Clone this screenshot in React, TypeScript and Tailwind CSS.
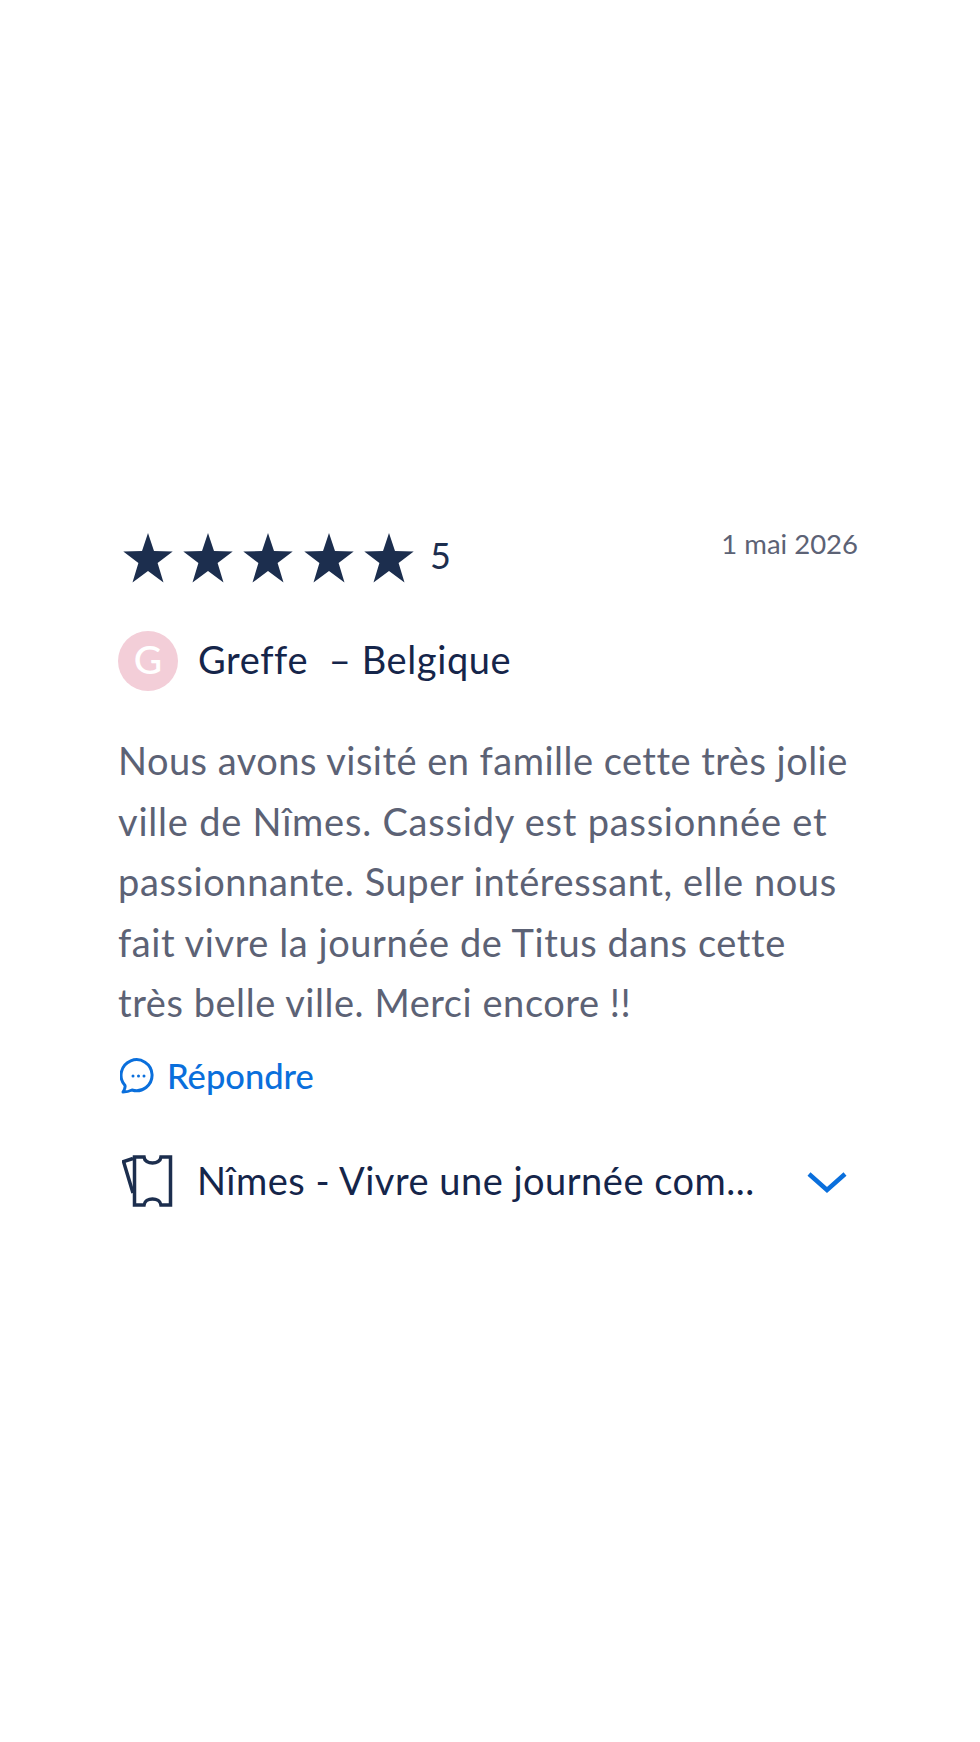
import React from "react";

const font = { fontFamily: '"Lato", "Noto Sans", sans-serif' };

function Star() {
  return (
    <svg width="50" height="50" viewBox="0 0 50 50" className="shrink-0">
      <path d="M25 0 L31 18 L49.7 18.5 L34.6 30 L40.5 49.5 L25 38 L9.5 49.5 L15.4 30 L0.3 18.5 L19 18 Z" fill="#1c2e4e" />
    </svg>
  );
}

export default function App() {
  return (
    <div className="w-[980px] h-[1742px] bg-white flex flex-col pt-[523px] pl-[118px] pr-[122px] [font-variant-ligatures:none]" style={font}>
      <div className="flex justify-between items-start h-[70px]">
        <div className="flex items-center pt-[10px]">
          <div className="flex gap-[10.4px] ml-[4.5px]">
            <Star /><Star /><Star /><Star /><Star />
          </div>
          <span className="ml-[16px] text-[36px] leading-[50px] text-[#1c2e4e] mt-[-6px]">5</span>
        </div>
        <span className="text-[27.5px] leading-[40px] text-[#5c6275] mt-[1px]">1 mai 2026</span>
      </div>
      <div className="flex items-center mt-[38px] h-[60px]">
        <div className="w-[60px] h-[60px] rounded-full bg-[#f3ced8] flex items-center justify-center text-white text-[39px] font-medium pb-[3px]">G</div>
        <span className="ml-[20px] text-[38px] tracking-[0.6px] text-[#15254a] whitespace-pre mt-[-3px]">Greffe  – Belgique</span>
      </div>
      <p className="mt-[39px] text-[38px] leading-[60.5px] text-[#5c6275]">
        <span className="block tracking-[0.48px]">Nous avons visité en famille cette très jolie</span>
        <span className="block tracking-[0.78px]">ville de Nîmes. Cassidy est passionnée et</span>
        <span className="block tracking-[0.6px]">passionnante. Super intéressant, elle nous</span>
        <span className="block tracking-[0.58px]">fait vivre la journée de Titus dans cette</span>
        <span className="block tracking-[0.55px]">très belle ville. Merci encore !!</span>
      </p>
      <div className="flex items-center mt-[21px] h-[44px]">
        <svg width="36" height="36" viewBox="0 0 36 36" fill="none" className="ml-[2px]">
          <path d="M3 34 C5 31 5.5 29.5 5 27.5 A15.5 15.5 0 1 1 12 32 C9 33.5 6 34 3 34 Z" stroke="#0a6fdc" strokeWidth="3" strokeLinejoin="round" />
          <circle cx="13" cy="18" r="1.5" fill="#0a6fdc" />
          <circle cx="18.5" cy="18" r="1.5" fill="#0a6fdc" />
          <circle cx="24" cy="18" r="1.5" fill="#0a6fdc" />
        </svg>
        <span className="ml-[11px] text-[34.5px] font-medium text-[#0a6fdc]">Répondre</span>
      </div>
      <div className="flex items-center justify-between mt-[57px] h-[52px] pr-[11px]">
        <div className="flex items-center">
          <svg width="54" height="52" viewBox="0 0 54 52" fill="none" className="ml-[4px] shrink-0">
            <path d="M11 3.5 L1.5 6.5 L11 38" stroke="#1c2e4e" strokeWidth="3.5" />
            <path d="M12.5 2 H22 C23 10 38 10 39 2 H48.5 V50 H39 C38 42 23 42 22 50 H12.5 Z" stroke="#1c2e4e" strokeWidth="3.5" />
          </svg>
          <span className="ml-[21px] text-[38px] tracking-[0.5px] text-[#15254a] whitespace-nowrap">Nîmes - Vivre une journée com...</span>
        </div>
        <svg width="40" height="24" viewBox="0 0 40 24" fill="none" className="mt-[3px]">
          <path d="M2 4 L20 20 L38 4" stroke="#0a6fdc" strokeWidth="4.5" />
        </svg>
      </div>
    </div>
  );
}
